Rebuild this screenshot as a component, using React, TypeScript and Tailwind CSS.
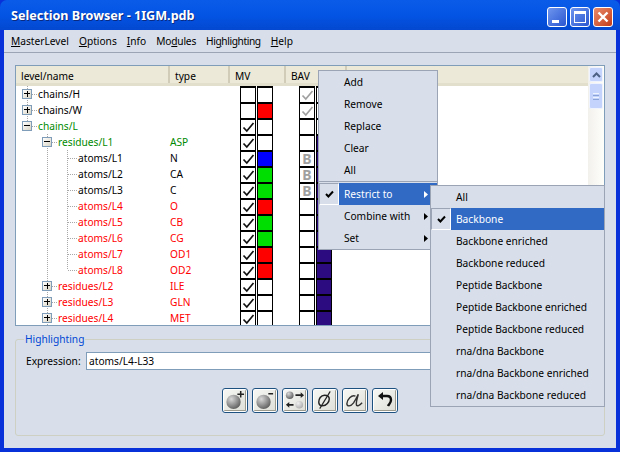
import type { ReactNode } from "react";

type Row = {
  name: string;
  type?: string;
  depth: number;
  expander?: "+" | "-";
  tone: "black" | "green" | "red";
  check?: boolean;
  fill?: string;
  bavCheck?: boolean;
  bavB?: boolean;
  purple?: boolean;
  last?: boolean;
};

const rows: Row[] = [
  { name: "chains/H", depth: 0, expander: "+", tone: "black", bavCheck: true },
  { name: "chains/W", depth: 0, expander: "+", tone: "black", fill: "bg-[#ff0000]", bavCheck: true },
  { name: "chains/L", depth: 0, expander: "-", tone: "green", check: true },
  { name: "residues/L1", type: "ASP", depth: 1, expander: "-", tone: "green", check: true, purple: true },
  { name: "atoms/L1", type: "N", depth: 2, tone: "black", check: true, fill: "bg-[#0000ff]", bavB: true, purple: true },
  { name: "atoms/L2", type: "CA", depth: 2, tone: "black", check: true, fill: "bg-[#00dd00]", bavB: true, purple: true },
  { name: "atoms/L3", type: "C", depth: 2, tone: "black", check: true, fill: "bg-[#00dd00]", bavB: true, purple: true },
  { name: "atoms/L4", type: "O", depth: 2, tone: "red", check: true, fill: "bg-[#ff0000]", purple: true },
  { name: "atoms/L5", type: "CB", depth: 2, tone: "red", check: true, fill: "bg-[#00dd00]", purple: true },
  { name: "atoms/L6", type: "CG", depth: 2, tone: "red", check: true, fill: "bg-[#00dd00]", purple: true },
  { name: "atoms/L7", type: "OD1", depth: 2, tone: "red", check: true, fill: "bg-[#ff0000]", purple: true },
  { name: "atoms/L8", type: "OD2", depth: 2, tone: "red", check: true, fill: "bg-[#ff0000]", purple: true, last: true },
  { name: "residues/L2", type: "ILE", depth: 1, expander: "+", tone: "red", check: true, purple: true },
  { name: "residues/L3", type: "GLN", depth: 1, expander: "+", tone: "red", check: true, purple: true },
  { name: "residues/L4", type: "MET", depth: 1, expander: "+", tone: "red", check: true, purple: true },
];

const toneClass = { black: "text-black", green: "text-[#008a00]", red: "text-[#ff0000]" };

function Check({ grey }: { grey?: boolean }) {
  return (
    <svg width="13" height="12" viewBox="0 0 13 12" className="block">
      <path d="M1.5 6.5 L4.8 10 L11.5 2" fill="none" stroke={grey ? "#a0a0a0" : "#111"} strokeWidth="1.7" />
    </svg>
  );
}

function Expander({ kind }: { kind: "+" | "-" }) {
  return (
    <div className="relative h-[10px] w-[10px] border border-[#7f9db9] bg-gradient-to-br from-white to-[#d8d4c4]">
      <div className="absolute left-[1px] top-[3px] h-px w-[6px] bg-black" />
      {kind === "+" && <div className="absolute left-[3.5px] top-[1px] h-[6px] w-px bg-black" />}
    </div>
  );
}

// dotted connectors in front of a tree row
function Guides({ row, index }: { row: Row; index: number }) {
  const dot = { stroke: "#a8a8a8", strokeDasharray: "1 1", strokeWidth: 1, fill: "none" };
  return (
    <svg width="78" height="16" className="absolute left-0 top-0">
      {row.depth === 0 && <path d={index === 2 ? "M11.5 0V8" : "M11.5 0V16"} {...dot} />}
      {row.depth === 0 && <path d="M16 8.5H22" {...dot} />}
      {row.depth >= 1 && <path d="M31.5 0V16" {...dot} />}
      {row.depth === 1 && <path d="M36 8.5H42" {...dot} />}
      {row.depth === 2 && <path d={row.last ? "M51.5 0V8" : "M51.5 0V16"} {...dot} />}
      {row.depth === 2 && <path d="M52 8.5H61" {...dot} />}
    </svg>
  );
}

function Box({ className, children }: { className?: string; children?: ReactNode }) {
  return (
    <div className={`flex h-4 w-4 shrink-0 items-center justify-center border-x border-t-2 border-black ${className ?? "bg-white"}`}>
      {children}
    </div>
  );
}

function TreeRow({ row, index }: { row: Row; index: number }) {
  const textLeft = [22, 42, 62][row.depth];
  const boxLeft = [6, 26][row.depth] ?? 0;
  return (
    <div className={`flex h-4 items-center ${toneClass[row.tone]}`}>
      <div className="relative h-4 w-[152px] shrink-0" style={{ paddingLeft: textLeft }}>
        <Guides row={row} index={index} />
        {row.expander && (
          <div className="absolute top-[3px]" style={{ left: boxLeft }}>
            <Expander kind={row.expander} />
          </div>
        )}
        <span className="relative leading-4">{row.name}</span>
      </div>
      <div className="w-[72px] shrink-0 pl-[2px] leading-4">{row.type}</div>
      <Box>{row.check && <Check />}</Box>
      <Box className={`ml-px ${row.fill ?? "bg-white"}`} />
      <div className="w-[26px] shrink-0" />
      <Box>
        {row.bavCheck && <Check grey />}
        {row.bavB && <span className="text-[14px] font-bold leading-[14px] text-[#a0a0a0]">B</span>}
      </Box>
      <Box className={`ml-px ${row.purple ? "bg-[#2c0a80]" : "bg-white"}`} />
    </div>
  );
}

function HeaderCell({ label, className }: { label: string; className: string }) {
  return (
    <div className={`flex h-full shrink-0 items-center pl-[5px] pt-[5px] ${className}`}>
      {label}
    </div>
  );
}

function Scrollbar() {
  return (
    <div className="flex w-[16px] shrink-0 flex-col bg-gradient-to-r from-[#f3f1ec] to-[#fefefb] px-px pt-px">
      <div className="flex h-[15px] items-center justify-center rounded-[2px] border border-[#eef3fd] bg-[#c3d3fb]">
        <svg width="9" height="6" viewBox="0 0 9 6">
          <path d="M1 5L4.5 1.5L8 5" fill="none" stroke="#4d6185" strokeWidth="2" />
        </svg>
      </div>
      <div className="mt-px flex h-[26px] flex-col items-center justify-center gap-px rounded-[2px] border border-[#eef3fd] bg-[#c3d3fb]">
        <div className="h-px w-[6px] bg-[#eef4fe]" />
        <div className="h-px w-[6px] bg-[#8aa4d8]" />
        <div className="h-px w-[6px] bg-[#eef4fe]" />
        <div className="h-px w-[6px] bg-[#8aa4d8]" />
      </div>
    </div>
  );
}

function Sphere({ id, cx, cy, r, light }: { id: string; cx: number; cy: number; r: number; light?: boolean }) {
  return (
    <>
      <defs>
        <radialGradient id={id} cx="0.35" cy="0.3" r="0.8">
          <stop offset="0" stopColor={light ? "#f0f0f0" : "#d8d8d8"} />
          <stop offset="1" stopColor={light ? "#a8a8a8" : "#555"} />
        </radialGradient>
      </defs>
      <circle cx={cx} cy={cy} r={r} fill={`url(#${id})`} />
    </>
  );
}

function ToolButton({ children }: { children: ReactNode }) {
  return (
    <div className="flex h-[25px] w-[26px] items-center justify-center rounded-[3px] border border-[#1c5180] bg-white p-px">
      <div className="flex h-full w-full items-center justify-center overflow-hidden rounded-[1px] border-b border-r border-[#9c9a8c] bg-gradient-to-br from-[#f6f6f4] to-[#e0e0da]">
        {children}
      </div>
    </div>
  );
}

function MenuItem({
  label,
  active,
  checked,
  arrow,
}: {
  label: string;
  active?: boolean;
  checked?: boolean;
  arrow?: boolean;
}) {
  return (
    <div className="flex h-[22px] items-stretch">
      <div
        className={`flex w-[20px] shrink-0 items-center justify-center ${
          checked ? "border border-b-white border-r-white border-l-[#9aa4b4] border-t-[#9aa4b4]" : ""
        }`}
      >
        {checked && (
          <svg width="9" height="8" viewBox="0 0 9 8">
            <path d="M1 4L3.4 6.5L8 1.5" fill="none" stroke="#000" strokeWidth="2" />
          </svg>
        )}
      </div>
      <div className={`flex flex-1 items-center justify-between whitespace-nowrap pl-[5px] pr-[9px] ${active ? "bg-[#316ac5] text-white" : ""}`}>
        <span className="pt-[2px]">{label}</span>
        {arrow && (
          <svg width="4" height="7" viewBox="0 0 4 7">
            <path d="M0 0L4 3.5L0 7Z" fill={active ? "#fff" : "#000"} />
          </svg>
        )}
      </div>
    </div>
  );
}

const Menu = ({ className, children }: { className: string; children: ReactNode }) => (
  <div className={`absolute border border-[#9aa4b4] bg-[#d8dfea] text-black ${className}`}>{children}</div>
);

export default function App() {
  return (
    <div className="relative h-[452px] w-[620px] overflow-hidden bg-[#0831d9] font-['Noto_Sans',sans-serif] text-[10.2px] text-black">
      {/* title bar */}
      <div className="flex h-[30px] items-center justify-between rounded-t-[7px] bg-gradient-to-b from-[#0a5ce8] via-[#0454e4] to-[#0348d0] pl-[11px] pr-[7px] pt-[3px]">
        <span className="text-[12.6px] font-bold text-white [text-shadow:1px_1px_0_#0a2a80]">Selection Browser - 1IGM.pdb</span>
        <div className="flex gap-[3px]">
          <div className="flex h-[20px] w-[20px] items-end rounded-[3px] border border-white bg-gradient-to-br from-[#6f95ee] to-[#2a55d0] pb-[3px] pl-[4px]">
            <div className="h-[3px] w-[7px] bg-white" />
          </div>
          <div className="flex h-[20px] w-[20px] items-center justify-center rounded-[3px] border border-white bg-gradient-to-br from-[#6f95ee] to-[#2a55d0]">
            <div className="h-[12px] w-[12px] border border-t-[3px] border-white" />
          </div>
          <div className="flex h-[20px] w-[20px] items-center justify-center rounded-[3px] border border-white bg-gradient-to-br from-[#e98a6a] to-[#c23a14]">
            <svg width="12" height="12" viewBox="0 0 12 12">
              <path d="M1.5 1.5L10.5 10.5M10.5 1.5L1.5 10.5" stroke="#fff" strokeWidth="2.4" />
            </svg>
          </div>
        </div>
      </div>

      {/* window body */}
      <div className="mx-[4px] h-[418px] bg-[#d8dfea]">
        <div className="flex h-[23px] items-center gap-[10px] border-b border-[#9aa4b4] pl-[7px] pr-[3px] pt-[2px]">
          <span><u>M</u>asterLevel</span>
          <span><u>O</u>ptions</span>
          <span><u>I</u>nfo</span>
          <span className="tracking-[-0.2px]">Mo<u>d</u>ules</span>
          <span className="tracking-[-0.4px]">Hi<u>g</u>hlighting</span>
          <span><u>H</u>elp</span>
        </div>

        <div className="px-[11px] pt-[12px]">
          {/* list */}
          <div className="flex h-[261px] border border-[#7f9db9] bg-white">
            <div className="min-w-0 flex-1 overflow-hidden">
              <div className="flex h-[20px] items-center border-b-[3px] border-[#e2dfcd] bg-[#ece9d8]">
                <HeaderCell label="level/name" className="w-[152px] pl-[4px]" />
                <HeaderCell label="type" className="w-[60px] border-l-2 border-[#d0ccb8]" />
                <HeaderCell label="MV" className="w-[56px] border-l-2 border-[#d0ccb8]" />
                <HeaderCell label="BAV" className="w-[61px] border-l-2 border-[#d0ccb8]" />
                <div className="h-full w-[2px] bg-[#d0ccb8]" />
              </div>
              {rows.map((row, i) => (
                <TreeRow key={row.name} row={row} index={i} />
              ))}
            </div>
            <Scrollbar />
          </div>

          {/* highlighting group */}
          <div className="relative mt-[13px] h-[97px] rounded-[3px] border border-[#cdd0c2] px-[10px] pt-[12px]">
            <span className="absolute -top-[8px] left-[8px] bg-[#d8dfea] px-px text-[#0046d5]">Highlighting</span>
            <div className="flex items-center">
              <span className="w-[60px] pt-[2px]">Expression:</span>
              <div className="flex h-[18px] flex-1 items-center border border-[#7f9db9] bg-white pl-[2px] pt-px">atoms/L4-L33</div>
            </div>
            <div className="mt-[18px] flex gap-[4px] pl-[196px]">
              <ToolButton>
                <svg width="22" height="22" viewBox="0 0 22 22">
                  <Sphere id="s1" cx={10} cy={13} r={7.5} />
                  <path d="M14 5H21M17.5 1.5V8.5" stroke="#222" strokeWidth="1.6" />
                </svg>
              </ToolButton>
              <ToolButton>
                <svg width="22" height="22" viewBox="0 0 22 22">
                  <Sphere id="s2" cx={10} cy={13} r={7.5} />
                  <path d="M15 4.5H20" stroke="#222" strokeWidth="1.6" />
                </svg>
              </ToolButton>
              <ToolButton>
                <svg width="22" height="22" viewBox="0 0 22 22">
                  <Sphere id="s3" cx={6} cy={6} r={4} />
                  <Sphere id="s4" cx={16} cy={16} r={4} light />
                  <path d="M12 6H18M10 16H5" fill="none" stroke="#222" strokeWidth="1.8" />
                  <path d="M17.5 3L21 6L17.5 9ZM5.5 13L2 16L5.5 19Z" fill="#222" />
                </svg>
              </ToolButton>
              <ToolButton>
                <svg width="22" height="22" viewBox="0 0 22 22">
                  <path d="M11 6C7 6 5 10 5 13C5 16 7 17 9 17C13 17 16 13 16 10C16 7 14 6 11 6Z" fill="none" stroke="#222" strokeWidth="1.5" />
                  <path d="M6 20L17 2" stroke="#222" strokeWidth="1.2" />
                </svg>
              </ToolButton>
              <ToolButton>
                <svg width="22" height="22" viewBox="0 0 22 22">
                  <path d="M12 7C8 5 3 11 3 15C3 18 7 18 10 14C12 11 14 7 15 5C14 9 12.5 13 13 16C13.5 18 16 17 19 14" fill="none" stroke="#333" strokeWidth="1.5" />
                </svg>
              </ToolButton>
              <ToolButton>
                <svg width="20" height="20" viewBox="0 0 20 20">
                  <path d="M7 6H12C15 6 16 8 16 10C16 13 14 14 13 16" fill="none" stroke="#111" strokeWidth="2.4" />
                  <path d="M3 6L8 2V10Z" fill="#111" />
                </svg>
              </ToolButton>
            </div>
          </div>
        </div>
      </div>

      {/* context menu */}
      <Menu className="left-[318px] top-[70px] w-[120px]">
        {["Add", "Remove", "Replace", "Clear", "All"].map((label) => (
          <MenuItem key={label} label={label} />
        ))}
        <div className="mb-px h-px bg-[#9aa4b4]" />
        <MenuItem label="Restrict to" active checked arrow />
        <MenuItem label="Combine with" arrow />
        <MenuItem label="Set" arrow />
      </Menu>

      {/* submenu */}
      <Menu className="left-[430px] top-[185px] w-[175px]">
        <MenuItem label="All" />
        <MenuItem label="Backbone" active checked />
        <MenuItem label="Backbone enriched" />
        <MenuItem label="Backbone reduced" />
        <MenuItem label="Peptide Backbone" />
        <MenuItem label="Peptide Backbone enriched" />
        <MenuItem label="Peptide Backbone reduced" />
        <MenuItem label="rna/dna Backbone" />
        <MenuItem label="rna/dna Backbone enriched" />
        <MenuItem label="rna/dna Backbone reduced" />
      </Menu>
    </div>
  );
}
